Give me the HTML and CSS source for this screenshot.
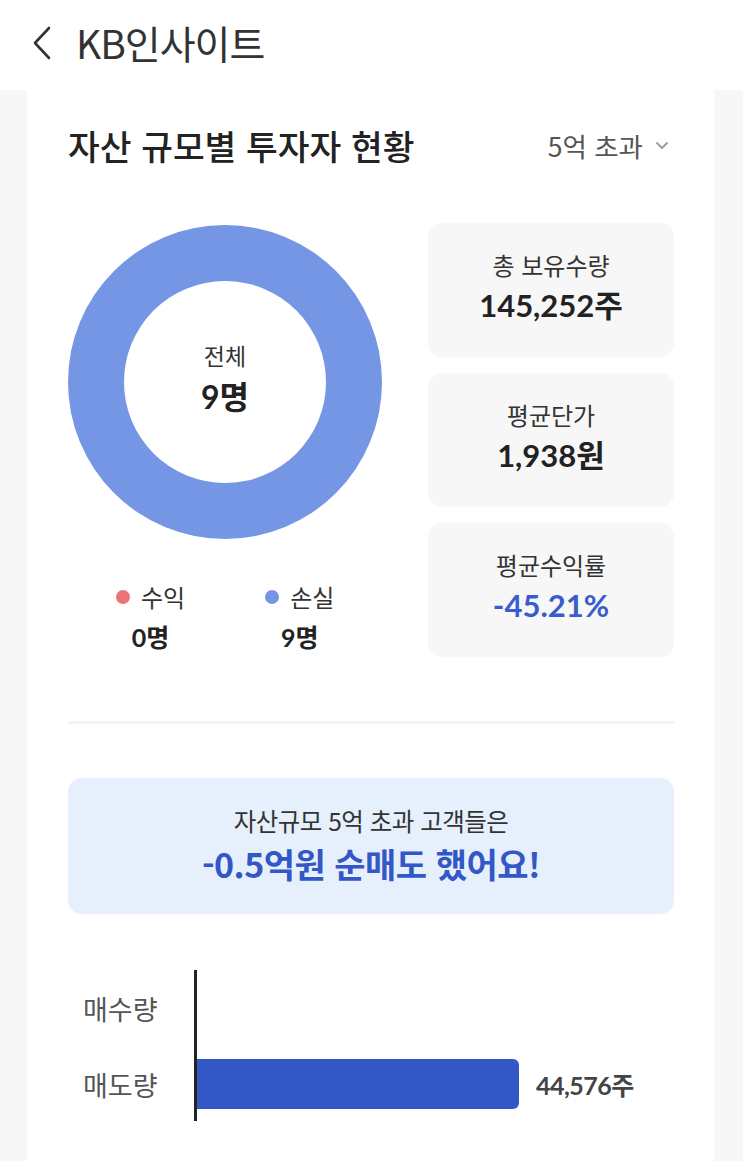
FILE: index.html
```html
<!DOCTYPE html>
<html lang="ko">
<head>
<meta charset="utf-8">
<link rel="stylesheet" href="styles.css">
</head>
<body>
<header class="topbar">
  <svg class="back" width="22" height="34" viewBox="0 0 22 34"><path d="M18 2 L4 17 L18 32" fill="none" stroke="#333" stroke-width="2.6" stroke-linecap="round" stroke-linejoin="round"/></svg>
  <span class="app-title">KB인사이트</span>
</header>
<main class="page">
  <section class="card">
    <div class="card-head">
      <h1 class="title">자산 규모별 투자자 현황</h1>
      <div class="filter">5억 초과
        <svg width="14" height="9" viewBox="0 0 14 9"><path d="M2 2 L7 7 L12 2" fill="none" stroke="#999" stroke-width="1.8" stroke-linecap="round" stroke-linejoin="round"/></svg>
      </div>
    </div>
    <div class="overview">
      <div class="chart-col">
        <div class="donut">
          <div class="donut-hole">
            <span class="donut-label">전체</span>
            <span class="donut-value">9명</span>
          </div>
        </div>
        <div class="legend">
          <div class="legend-item">
            <div class="legend-name"><span class="dot dot-red"></span>수익</div>
            <div class="legend-value">0명</div>
          </div>
          <div class="legend-item">
            <div class="legend-name"><span class="dot dot-blue"></span>손실</div>
            <div class="legend-value">9명</div>
          </div>
        </div>
      </div>
      <div class="stats">
        <div class="stat">
          <div class="stat-label">총 보유수량</div>
          <div class="stat-value">145,252주</div>
        </div>
        <div class="stat">
          <div class="stat-label">평균단가</div>
          <div class="stat-value">1,938원</div>
        </div>
        <div class="stat">
          <div class="stat-label">평균수익률</div>
          <div class="stat-value blue">-45.21%</div>
        </div>
      </div>
    </div>
    <div class="divider"></div>
    <div class="notice">
      <div class="notice-sub">자산규모 5억 초과 고객들은</div>
      <div class="notice-main">-0.5억원 순매도 했어요!</div>
    </div>
    <div class="bars">
      <div class="bar-labels">
        <span>매수량</span>
        <span>매도량</span>
      </div>
      <div class="bar-area">
        <div class="bar-row"></div>
        <div class="bar-row">
          <div class="bar" style="width:322px"></div>
          <span class="bar-value">44,576주</span>
        </div>
      </div>
    </div>
  </section>
</main>
</body>
</html>
```
FILE: styles.css
```css
* { box-sizing: border-box; }
html, body { margin: 0; padding: 0; }
body {
  width: 743px;
  height: 1161px;
  overflow: hidden;
  background: #f7f7f8;
  font-family: "Noto Sans CJK KR", "Noto Sans", sans-serif;
  color: #222;
}
.topbar {
  height: 90px;
  background: #fff;
  display: flex;
  align-items: center;
  padding-left: 31px;
  padding-bottom: 6px;
}
.back { margin-right: 23px; margin-top: 2px; }
.app-title {
  font-size: 39px;
  color: #333;
  letter-spacing: -1px;
  font-weight: 400;
}
.page {
  padding: 0 29px 0 27px;
}
.card {
  background: #fff;
  height: 1071px;
  padding: 0 40px 0 41px;
}
.card-head {
  display: flex;
  justify-content: space-between;
  align-items: center;
  padding-top: 26px;
  height: 84px;
}
.title {
  margin: 0;
  font-size: 34.5px;
  font-weight: 500;
  color: #222;
  letter-spacing: 0;
}
.filter {
  font-size: 26.5px;
  color: #555;
  display: flex;
  align-items: center;
  gap: 12px;
  margin-right: 5px;
}
.overview {
  display: flex;
  justify-content: space-between;
  margin-top: 49px;
}
.chart-col { width: 314px; margin-left: 0; }
.donut {
  width: 314px;
  height: 314px;
  border-radius: 50%;
  background: #7596e5;
  display: flex;
  align-items: center;
  justify-content: center;
  margin-top: 2px;
}
.donut-hole {
  width: 202px;
  height: 202px;
  border-radius: 50%;
  background: #fff;
  display: flex;
  flex-direction: column;
  align-items: center;
  justify-content: center;
  padding-bottom: 8px;
}
.donut-label { font-size: 23px; color: #333; line-height: 30px; }
.donut-value {
  font-family: "Lato", "Noto Sans CJK KR", sans-serif;
  font-size: 32px;
  font-weight: 700;
  color: #222;
  line-height: 40px;
  margin-top: 7px;
}
.legend {
  display: flex;
  margin-top: 43px;
  padding-left: 48px;
  gap: 80px;
}
.legend-item { display: flex; flex-direction: column; align-items: center; }
.legend-name {
  display: flex;
  align-items: center;
  font-size: 24px;
  color: #333;
  line-height: 30px;
}
.dot { width: 14px; height: 14px; border-radius: 50%; margin-right: 11px; }
.dot-red { background: #eb7474; }
.dot-blue { background: #7596e5; }
.legend-value {
  font-family: "Lato", "Noto Sans CJK KR", sans-serif;
  font-weight: 700;
  font-size: 25px;
  color: #222;
  margin-top: 6px;
}
.stats {
  width: 246px;
  display: flex;
  flex-direction: column;
  gap: 16px;
}
.stat {
  height: 134px;
  background: #f7f7f7;
  border-radius: 14px;
  display: flex;
  flex-direction: column;
  align-items: center;
  justify-content: center;
  padding-bottom: 6px;
}
.stat-label { font-size: 24px; color: #333; line-height: 30px; }
.stat-value {
  font-family: "Lato", "Noto Sans CJK KR", sans-serif;
  font-size: 31px;
  font-weight: 700;
  color: #222;
  line-height: 38px;
  margin-top: 6px;
}
.stat-value.blue { color: #3a5ccc; }
.divider {
  height: 3px;
  background: #f3f3f4;
  margin-top: 64px;
}
.notice {
  margin-top: 54px;
  height: 136px;
  background: #e6f0fc;
  border-radius: 14px;
  display: flex;
  flex-direction: column;
  align-items: center;
  justify-content: center;
}
.notice-sub { font-size: 24.5px; color: #333; line-height: 30px; letter-spacing: -0.5px; }
.notice-main {
  font-size: 34px;
  font-weight: 700;
  color: #3357c6;
  line-height: 44px;
  letter-spacing: -0.5px;
  margin-top: 6px;
}
.bars {
  display: flex;
  margin-top: 56px;
}
.bar-labels {
  width: 126px;
  display: flex;
  flex-direction: column;
  padding-left: 15px;
  padding-top: 21px;
  gap: 40px;
  font-size: 27px;
  color: #555;
  line-height: 36px;
}
.bar-area {
  border-left: 3px solid #222;
  height: 151px;
  padding-top: 13px;
  display: flex;
  flex-direction: column;
  gap: 26px;
}
.bar-row { height: 50px; display: flex; align-items: center; }
.bar {
  height: 50px;
  background: #3358c6;
  border-radius: 0 6px 6px 0;
}
.bar-value {
  font-family: "Lato", "Noto Sans CJK KR", sans-serif;
  font-weight: 700;
  font-size: 25px;
  color: #444;
  margin-left: 17px;
  letter-spacing: -0.5px;
}
```
